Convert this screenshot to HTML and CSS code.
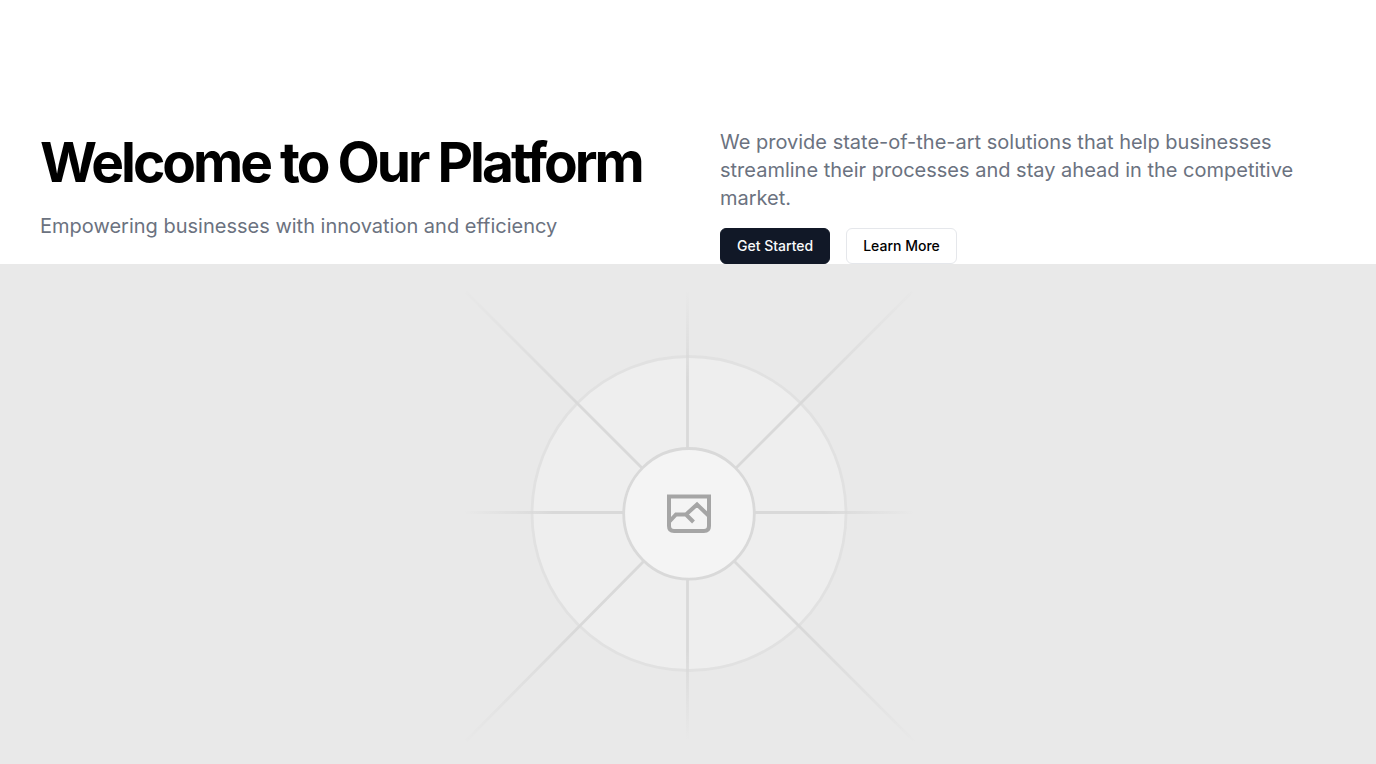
FILE: index.html
```html
<!DOCTYPE html>
<html lang="en">
<head>
<meta charset="utf-8">
<meta name="viewport" content="width=device-width, initial-scale=1">
<title>Welcome to Our Platform</title>
<link rel="stylesheet" href="styles.css">
</head>
<body>
<main class="hero">
  <section class="intro">
    <div class="heading">
      <h1 class="title">Welcome to Our Platform</h1>
      <p class="lead">Empowering businesses with innovation and efficiency</p>
    </div>
    <div class="details">
      <p class="lead">We provide state-of-the-art solutions that help businesses streamline their processes and stay ahead in the competitive market.</p>
      <div class="actions">
        <button class="button primary" type="button">Get Started</button>
        <button class="button outline" type="button">Learn More</button>
      </div>
    </div>
  </section>
  <div class="media">
    <svg class="placeholder" viewBox="0 0 500 500" role="img" aria-label="Image placeholder">
      <defs>
        <radialGradient id="fade" gradientUnits="userSpaceOnUse" cx="251" cy="251" r="226">
          <stop offset="0" stop-color="#d9d9d9"/>
          <stop offset="0.6" stop-color="#d9d9d9"/>
          <stop offset="1" stop-color="#d9d9d9" stop-opacity="0"/>
        </radialGradient>
        <radialGradient id="fade-diagonal" gradientUnits="userSpaceOnUse" cx="251" cy="251" r="326">
          <stop offset="0" stop-color="#d9d9d9"/>
          <stop offset="0.5" stop-color="#d9d9d9"/>
          <stop offset="1" stop-color="#d9d9d9" stop-opacity="0"/>
        </radialGradient>
      </defs>
      <circle cx="251" cy="249.500" r="157" fill="#eee" stroke="#e1e1e1" stroke-width="2.800"/>
      <path d="M249.500 27V475M27 248.500H475" stroke="url(#fade)" stroke-width="2.800"/>
      <path d="M28 28L204 204M474 28L298 204M206 297L28 477M296 297L476 477" stroke="url(#fade-diagonal)" stroke-width="2.800"/>
      <circle cx="251" cy="249.800" r="65.300" fill="#f4f4f4" stroke="#d9d9d9" stroke-width="2.800"/>
      <path d="M231 232.500H271V262Q271 267 266 267H236Q231 267 231 262ZM231 258L238 250.500H248L259 240.500L271 252M248 250.500L255.500 258" fill="none" stroke="#a5a5a5" stroke-width="4"/>
    </svg>
  </div>
</main>
</body>
</html>
```
FILE: styles.css
```css
* {
  box-sizing: border-box;
}

body {
  margin: 0;
  background: #fff;
  color: #000;
  font-family: Inter, sans-serif;
}

.hero {
  display: flex;
  flex-direction: column;
  min-height: 100vh;
  padding-top: 128px;
}

.intro {
  display: grid;
  grid-template-columns: 1fr 1fr;
  gap: 64px;
  padding: 0 40px;
}

.title,
.lead {
  margin: 0;
}

.title {
  padding-top: 6px;
  font-size: 55px;
  line-height: 56px;
  font-weight: 700;
  letter-spacing: -3px;
}

.lead {
  color: #6b7280;
  font-size: 20px;
  line-height: 28px;
}

.title + .lead {
  margin-top: 22px;
}

.actions {
  display: flex;
  gap: 16px;
  margin-top: 16px;
}

.button {
  height: 36px;
  padding: 0 16px;
  border: 1px solid #111827;
  border-radius: 6px;
  font: 500 14px/20px Inter, sans-serif;
}

.primary {
  background: #111827;
  color: #f9fafb;
}

.outline {
  border-color: #e5e7eb;
  background: #fff;
  color: #000;
}

.media {
  display: flex;
  flex: 1;
  justify-content: center;
  background: #e9e9e9;
}

.placeholder {
  display: block;
  width: 500px;
  max-width: 100%;
}
```
